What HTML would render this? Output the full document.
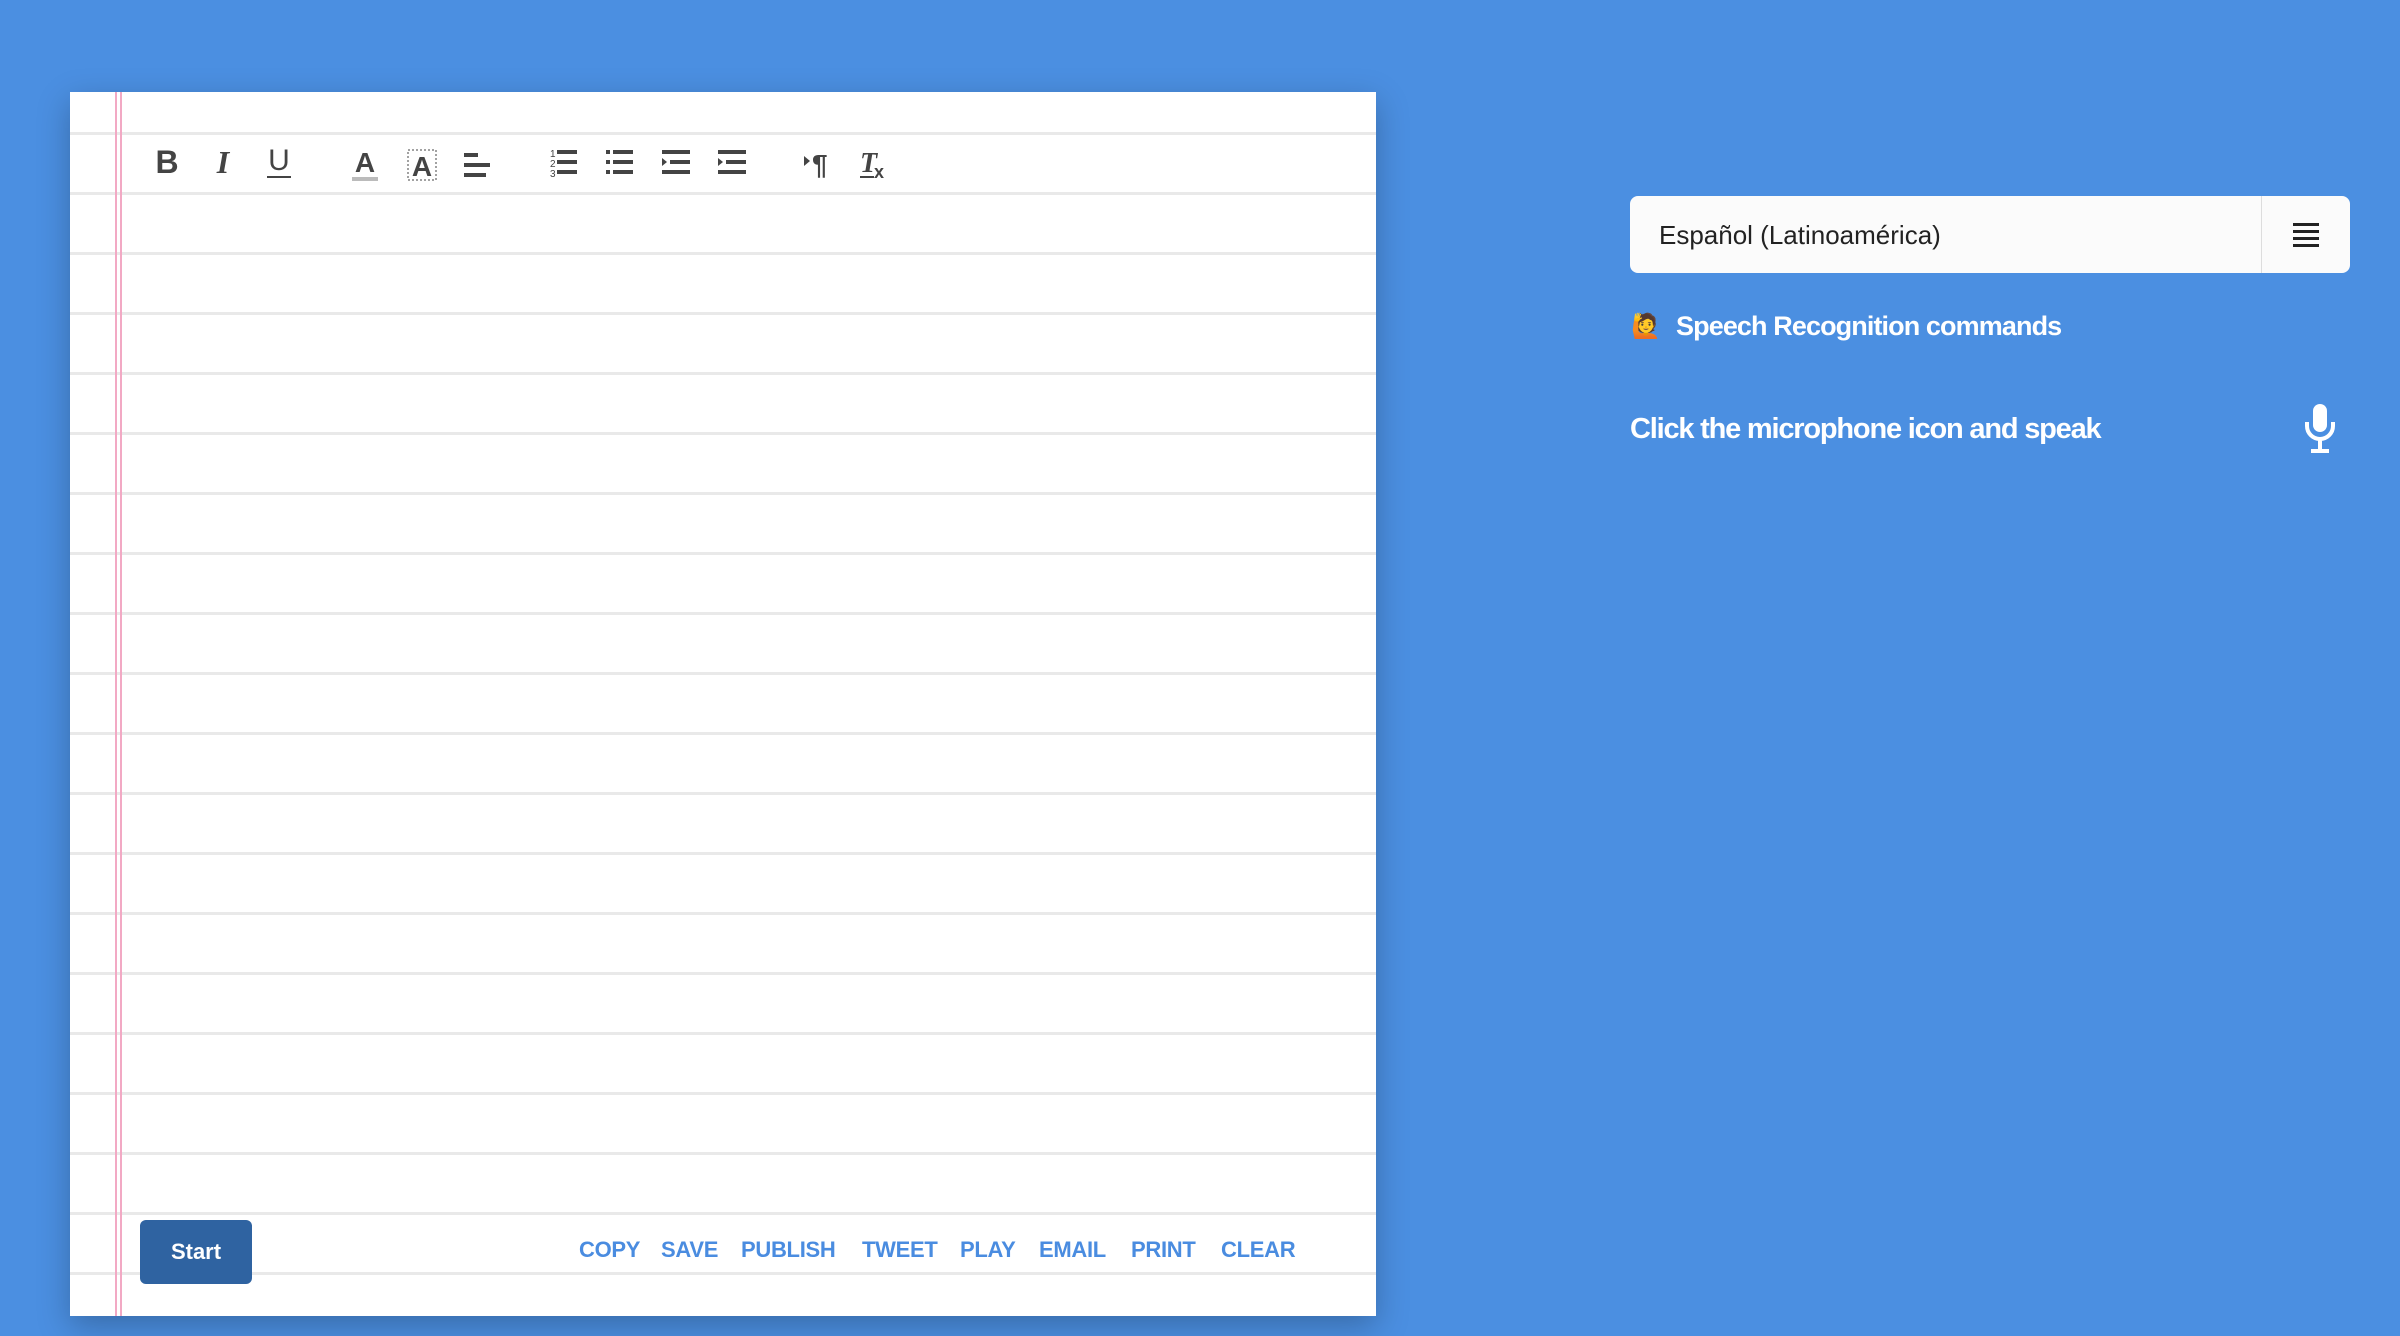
<!DOCTYPE html>
<html><head><meta charset="utf-8"><style>
body{margin:0;width:2400px;height:1336px;background:#4b8fe1;font-family:"Liberation Sans",sans-serif;overflow:hidden;position:relative}
.paper{position:absolute;left:70px;top:92px;width:1306px;height:1224px;background:#fff;box-shadow:0 10px 30px rgba(0,0,0,.25);
background-image:repeating-linear-gradient(to bottom,transparent 0,transparent 40px,#e9e9e9 40px,#e9e9e9 43px,transparent 43px,transparent 60px);overflow:hidden}
.pink{position:absolute;top:0;bottom:0;width:2px;background:#f2a9c4}
.btn{position:absolute;left:140px;top:1220px;width:112px;height:64px;background:#2f63a1;border-radius:6px;color:#fff;font-weight:bold;font-size:22px;line-height:64px;text-align:center}
.lk{position:absolute;top:1237px;color:#4a8ce0;font-weight:bold;font-size:22px;letter-spacing:-0.3px}
</style></head><body>
<div class="paper">
<div class="pink" style="left:45px"></div><div class="pink" style="left:50px"></div>
</div>
<svg style="position:absolute;left:0;top:0" width="1400" height="260" fill="#444" stroke="#444">
<text x="167" y="173" font-size="32" font-weight="bold" text-anchor="middle" stroke="none">B</text>
<text x="223" y="173" font-size="32" font-style="italic" font-family="Liberation Serif" font-weight="bold" text-anchor="middle" stroke="none">I</text>
<text x="279" y="170" font-size="30" text-anchor="middle" stroke="none">U</text><rect x="267" y="176" width="24" height="2" stroke="none"/>
<text x="365" y="172" font-size="28" font-weight="bold" text-anchor="middle" stroke="none">A</text><rect x="352" y="177" width="26" height="4" fill="#bbb" stroke="none"/>
<rect x="408" y="150" width="28" height="30" fill="none" stroke="#444" stroke-dasharray="2 2"/><text x="422" y="176" font-size="28" font-weight="bold" text-anchor="middle" stroke="none">A</text>
<g stroke="none"><rect x="464" y="153" width="14" height="4"/><rect x="464" y="163" width="26" height="4"/><rect x="464" y="173" width="22" height="4"/></g>
<g stroke="none"><text x="550" y="157" font-size="10">1</text><text x="550" y="167" font-size="10">2</text><text x="550" y="177" font-size="10">3</text>
<rect x="557" y="150" width="20" height="4"/><rect x="557" y="160" width="20" height="4"/><rect x="557" y="170" width="20" height="4"/>
<rect x="606" y="150" width="4" height="4"/><rect x="606" y="160" width="4" height="4"/><rect x="606" y="170" width="4" height="4"/>
<rect x="613" y="150" width="20" height="4"/><rect x="613" y="160" width="20" height="4"/><rect x="613" y="170" width="20" height="4"/>
<rect x="662" y="150" width="28" height="4"/><rect x="670" y="160" width="20" height="4"/><rect x="662" y="170" width="28" height="4"/><path d="M662 158v8l5-4z"/>
<rect x="718" y="150" width="28" height="4"/><rect x="726" y="160" width="20" height="4"/><rect x="718" y="170" width="28" height="4"/><path d="M718 158v8l5-4z"/>
<path d="M804 156v10l6-5z"/><text x="812" y="174" font-size="28" font-weight="bold">¶</text>
<text x="860" y="172" font-size="28" font-style="italic" font-weight="bold" font-family="Liberation Serif">T</text><text x="874" y="178" font-size="18" font-weight="bold">x</text><rect x="860" y="176" width="14" height="2"/></g>
</svg>
<div class="btn">Start</div>
<span class="lk" style="left:579px">COPY</span><span class="lk" style="left:661px">SAVE</span><span class="lk" style="left:741px">PUBLISH</span><span class="lk" style="left:862px">TWEET</span><span class="lk" style="left:960px">PLAY</span><span class="lk" style="left:1039px">EMAIL</span><span class="lk" style="left:1131px">PRINT</span><span class="lk" style="left:1221px">CLEAR</span>
<div style="position:absolute;left:1630px;top:196px;width:720px;height:77px;background:#fbfbfb;border-radius:8px"></div>
<div style="position:absolute;left:2261px;top:196px;width:1px;height:77px;background:#ddd"></div>
<div style="position:absolute;left:1659px;top:220px;font-size:26px;color:#222">Español (Latinoamérica)</div>
<div style="position:absolute;left:2293px;top:223px;width:26px">
<div style="height:3px;background:#222;margin-bottom:4px"></div><div style="height:3px;background:#222;margin-bottom:4px"></div><div style="height:3px;background:#222;margin-bottom:4px"></div><div style="height:3px;background:#222"></div></div>
<div style="position:absolute;left:1631px;top:312px;font-size:24px">🙋</div>
<div style="position:absolute;left:1676px;top:311px;font-size:27px;font-weight:bold;color:#fff;letter-spacing:-0.9px">Speech Recognition commands</div>
<div style="position:absolute;left:1630px;top:413px;font-size:29px;font-weight:bold;color:#fff;letter-spacing:-1.2px">Click the microphone icon and speak</div>
<svg style="position:absolute;left:2302px;top:402px" width="36" height="52" fill="none" stroke="#fff" stroke-width="4">
<rect x="11" y="2" width="14" height="28" rx="7" fill="#fff" stroke="none"/><path d="M5 20v4a13 13 0 0 0 26 0v-4M18 37v11M9 49h18"/></svg>
</body></html>
